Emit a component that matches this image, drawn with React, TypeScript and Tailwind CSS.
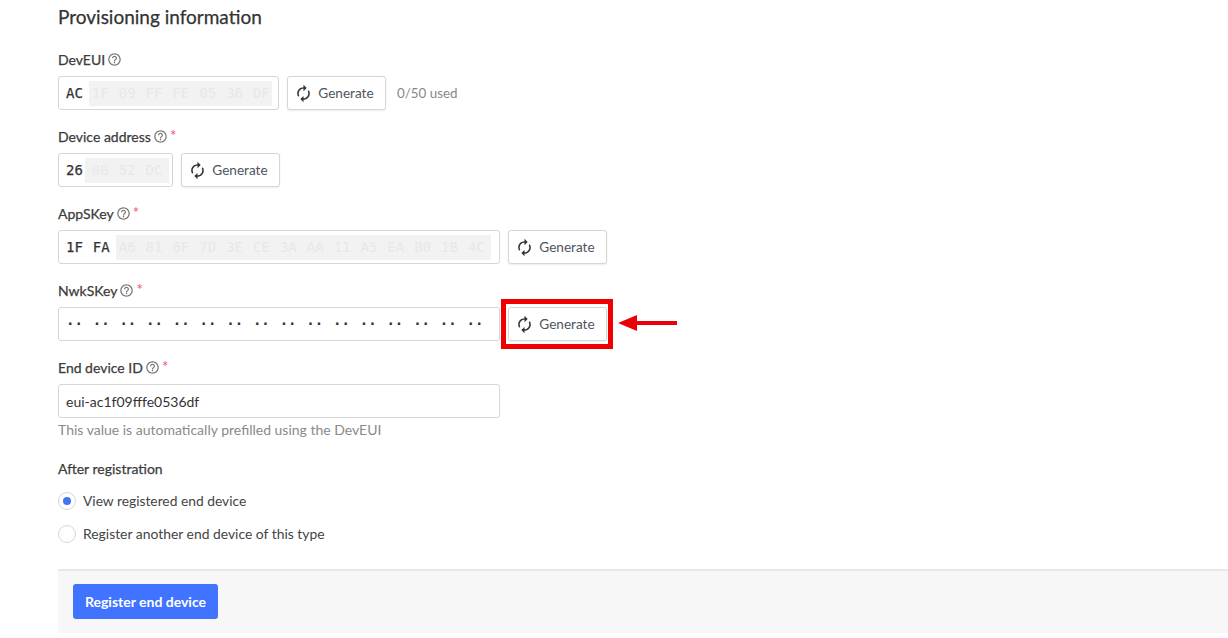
import { MdAutorenew, MdHelpOutline } from "react-icons/md";

const sans = "font-['Lato','Noto_Sans',sans-serif]";
const mono = "font-['DejaVu_Sans_Mono','Liberation_Mono',monospace]";
const medium = "[-webkit-text-stroke:0.25px]";

function Bytes({ items, className }: { items: string[]; className: string }) {
  return (
    <span className={`flex gap-[10px] ${className}`}>
      {items.map((b, i) => (
        <span key={i}>{b}</span>
      ))}
    </span>
  );
}

function Label({ text, required }: { text: string; required?: boolean }) {
  return (
    <div className="flex h-5 items-center text-[14px] text-[#3c3c3c]">
      <span className={medium}>{text}</span>
      <MdHelpOutline className="ml-[2px] text-[#777]" size={15} />
      {required && <span className="-mt-[2px] ml-[2px] text-[15px] text-[#f0555f]">*</span>}
    </div>
  );
}

function GenerateButton() {
  return (
    <button className="flex h-[34px] w-[99px] items-center justify-center gap-[5px] rounded-[3px] border border-[#d6d6d6] bg-white pr-[5px] text-[13.6px] text-[#4f5560] shadow-[0_1px_2px_rgba(0,0,0,0.08)]">
      <MdAutorenew className="text-[#333]" size={19} />
      Generate
    </button>
  );
}

function ByteInput({
  width,
  shown,
  masked,
  gapLeft,
  gapWidth,
}: {
  width: string;
  shown: string[];
  masked: string[];
  gapLeft: string;
  gapWidth: string;
}) {
  return (
    <div className={`flex h-[34px] items-center rounded-[3px] border border-[#d6d6d6] bg-white pl-[7px] ${width} ${mono}`}>
      <Bytes items={shown} className={`text-[14px] text-[#333] ${medium}`} />
      <span className={`flex h-[25px] items-center bg-[#f2f2f2] ${gapLeft} ${gapWidth}`}>
        <Bytes items={masked} className="text-[14px] text-[#e8e8e8]" />
      </span>
    </div>
  );
}

export default function App() {
  const dots = Array.from({ length: 16 }, () => "··");

  return (
    <div className={`h-[638px] w-[1228px] overflow-hidden bg-white ${sans}`}>
      <div className="pl-[58px] pt-[6px]">
        <h2 className={`h-[22px] text-[19px] leading-[22px] text-[#333] ${medium}`}>Provisioning information</h2>

        <div className="mt-[21px]">
          <Label text="DevEUI" />
          <div className="mt-[7px] flex items-center gap-2">
            <ByteInput
              width="w-[221px]"
              shown={["AC"]}
              masked={["1F", "09", "FF", "FE", "05", "36", "DF"]}
              gapLeft="ml-[6px] pl-[3px]"
              gapWidth="w-[183px]"
            />
            <GenerateButton />
            <span className="ml-[3px] text-[13.4px] text-[#888]">0/50 used</span>
          </div>
        </div>

        <div className="mt-[16px]">
          <Label text="Device address" required />
          <div className="mt-[7px] flex items-center gap-2">
            <ByteInput
              width="w-[115px]"
              shown={["26"]}
              masked={["0B", "52", "DC"]}
              gapLeft="ml-[2px] pl-[7px]"
              gapWidth="w-[84px]"
            />
            <GenerateButton />
          </div>
        </div>

        <div className="mt-[16px]">
          <Label text="AppSKey" required />
          <div className="mt-[7px] flex items-center gap-2">
            <ByteInput
              width="w-[442px]"
              shown={["1F", "FA"]}
              masked={["A6", "81", "6F", "7D", "3E", "CE", "3A", "AA", "11", "A5", "EA", "B0", "1B", "4C"]}
              gapLeft="ml-[6px] pl-[3px]"
              gapWidth="w-[375px]"
            />
            <GenerateButton />
          </div>
        </div>

        <div className="mt-[16px]">
          <Label text="NwkSKey" required />
          <div className="mt-[7px] flex items-center gap-2">
            <div className={`flex h-[34px] w-[442px] items-center rounded-[3px] border border-[#d6d6d6] bg-white pl-[7px] ${mono}`}>
              <span className="flex gap-[9.85px] text-[14px] font-bold text-[#333]">
                {dots.map((d, i) => (
                  <span key={i}>{d}</span>
                ))}
              </span>
            </div>
            <div className="relative">
              <GenerateButton />
              {/* annotation over the button */}
              <div className="absolute -top-[8px] -bottom-[8px] -left-[7px] -right-[6px] border-[5px] border-[#f00000]" />
              <svg className="absolute left-[110px] top-[7px]" width="60" height="18" viewBox="0 0 60 18">
                <path d="M0 9 L19 1 V7 H59 V11 H19 V17 Z" fill="#e8000b" />
              </svg>
            </div>
          </div>
        </div>

        <div className="mt-[16px]">
          <Label text="End device ID" required />
          <div className="mt-[7px] flex h-[34px] w-[442px] items-center rounded-[3px] border border-[#d6d6d6] bg-white pl-[7px] text-[14px] text-[#333]">
            eui-ac1f09fffe0536df
          </div>
          <div className="mt-[2px] h-5 text-[14px] leading-5 text-[#8a8a8a]">This value is automatically prefilled using the DevEUI</div>
        </div>

        <div className={`mt-[19px] h-5 text-[14px] leading-5 text-[#3c3c3c] ${medium}`}>After registration</div>

        <div className="mt-[12px] flex h-5 items-center gap-[7px] text-[13.8px] text-[#444]">
          <span className="flex h-[18px] w-[18px] items-center justify-center rounded-full border border-[#d6d6d6] bg-white">
            <span className="h-[8px] w-[8px] rounded-full bg-[#4075f5]" />
          </span>
          View registered end device
        </div>
        <div className="mt-[13px] flex h-5 items-center gap-[7px] text-[13.9px] text-[#444]">
          <span className="h-[18px] w-[18px] rounded-full border border-[#d6d6d6] bg-white" />
          Register another end device of this type
        </div>

        <div className="mt-[25px] h-[64px] border-t-2 border-[#e8e8e8] bg-[#f7f7f7] pl-[15px] pt-[13px]">
          <button className="h-[35px] w-[145px] rounded-[3px] bg-[#4073ff] text-[14px] font-bold text-white">Register end device</button>
        </div>
      </div>
    </div>
  );
}
